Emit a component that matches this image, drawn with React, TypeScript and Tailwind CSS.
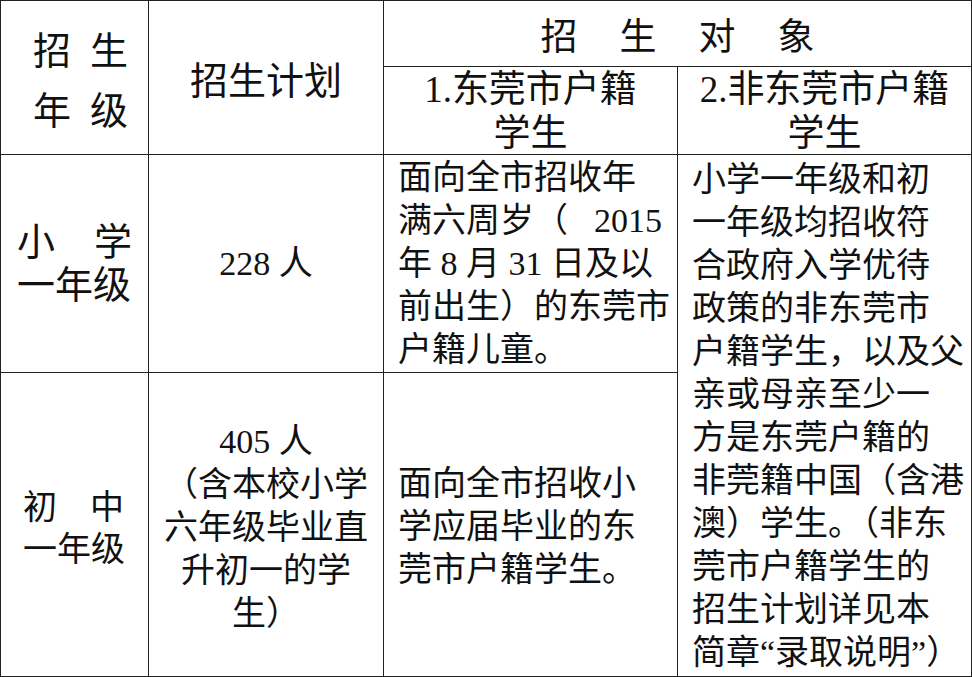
const body = '"Liberation Serif", "Noto Sans CJK SC", serif'

function Lines({ lines }: { lines: string[] }) {
  return (
    <>
      {lines.map((l) => (
        <div key={l} className="whitespace-nowrap">
          {l}
        </div>
      ))}
    </>
  )
}

export default function App() {
  const cell = "border-r border-b border-[#222] bg-white"
  return (
    <div
      className="w-[972px] h-[677px] bg-white text-[#111] border-t border-l border-[#222] grid grid-cols-[148px_235px_294px_294px] grid-rows-[66px_88px_218px_304px]"
      style={{ fontFamily: body }}
    >
      {/* ===== HEADER ===== */}
      <div className={`${cell} row-span-2 flex flex-col justify-center gap-[22px] pl-[32px] pr-[20px] pt-[6px] text-[38px] leading-[38px]`}>
        <div className="flex justify-between"><span>招</span><span>生</span></div>
        <div className="flex justify-between"><span>年</span><span>级</span></div>
      </div>
      <div className={`${cell} row-span-2 flex items-center justify-center pt-[8px] text-[38px]`}>
        招生计划
      </div>
      <div className={`${cell} col-span-2 flex items-center justify-center gap-[42px] pt-[8px] text-[37px]`}>
        <span>招</span>
        <span>生</span>
        <span>对</span>
        <span>象</span>
      </div>
      <div className={`${cell} flex flex-col items-center justify-center text-[37px] leading-[44px] pt-[2px]`}>
        <div>1.东莞市户籍</div>
        <div>学生</div>
      </div>
      <div className={`${cell} flex flex-col items-center justify-center text-[37px] leading-[44px] pt-[2px]`}>
        <div>2.非东莞市户籍</div>
        <div>学生</div>
      </div>

      {/* ===== 小学一年级 ===== */}
      <div className={`${cell} flex flex-col justify-center px-[16px] text-[38px] leading-[43px]`}>
        <div className="flex justify-between"><span>小</span><span>学</span></div>
        <div className="whitespace-nowrap">一年级</div>
      </div>
      <div className={`${cell} flex items-center justify-center text-[34px]`}>228 人</div>
      <div className={`${cell} flex flex-col justify-center pl-[14px] text-[34px] leading-[43px]`}>
        <div>面向全市招收年</div>
        <div className="flex justify-between w-[264px]"><span>满六周岁（</span><span>2015</span></div>
        <div className="whitespace-nowrap">年 8 月 31 日及以</div>
        <div className="whitespace-nowrap">前出生）的东莞市</div>
        <div>户籍儿童。</div>
      </div>
      <div className={`${cell} row-span-2 flex flex-col justify-center pl-[14px] text-[34px] leading-[43px]`}>
        <Lines
          lines={[
            "小学一年级和初",
            "一年级均招收符",
            "合政府入学优待",
            "政策的非东莞市",
            "户籍学生，以及父",
            "亲或母亲至少一",
            "方是东莞户籍的",
            "非莞籍中国（含港",
            "澳）学生。（非东",
            "莞市户籍学生的",
            "招生计划详见本",
            "简章“录取说明”）",
          ]}
        />
      </div>

      {/* ===== 初中一年级 ===== */}
      <div className={`${cell} flex flex-col justify-center pl-[22px] pr-[24px] pt-[8px] text-[34px] leading-[42px]`}>
        <div className="flex justify-between"><span>初</span><span>中</span></div>
        <div className="whitespace-nowrap">一年级</div>
      </div>
      <div className={`${cell} flex flex-col items-center justify-center text-[34px] leading-[43px] pt-[6px]`}>
        <Lines lines={["405 人", "（含本校小学", "六年级毕业直", "升初一的学", "生）"]} />
      </div>
      <div className={`${cell} flex flex-col justify-center pl-[14px] text-[34px] leading-[43px] pt-[4px]`}>
        <Lines lines={["面向全市招收小", "学应届毕业的东", "莞市户籍学生。"]} />
      </div>
    </div>
  )
}
